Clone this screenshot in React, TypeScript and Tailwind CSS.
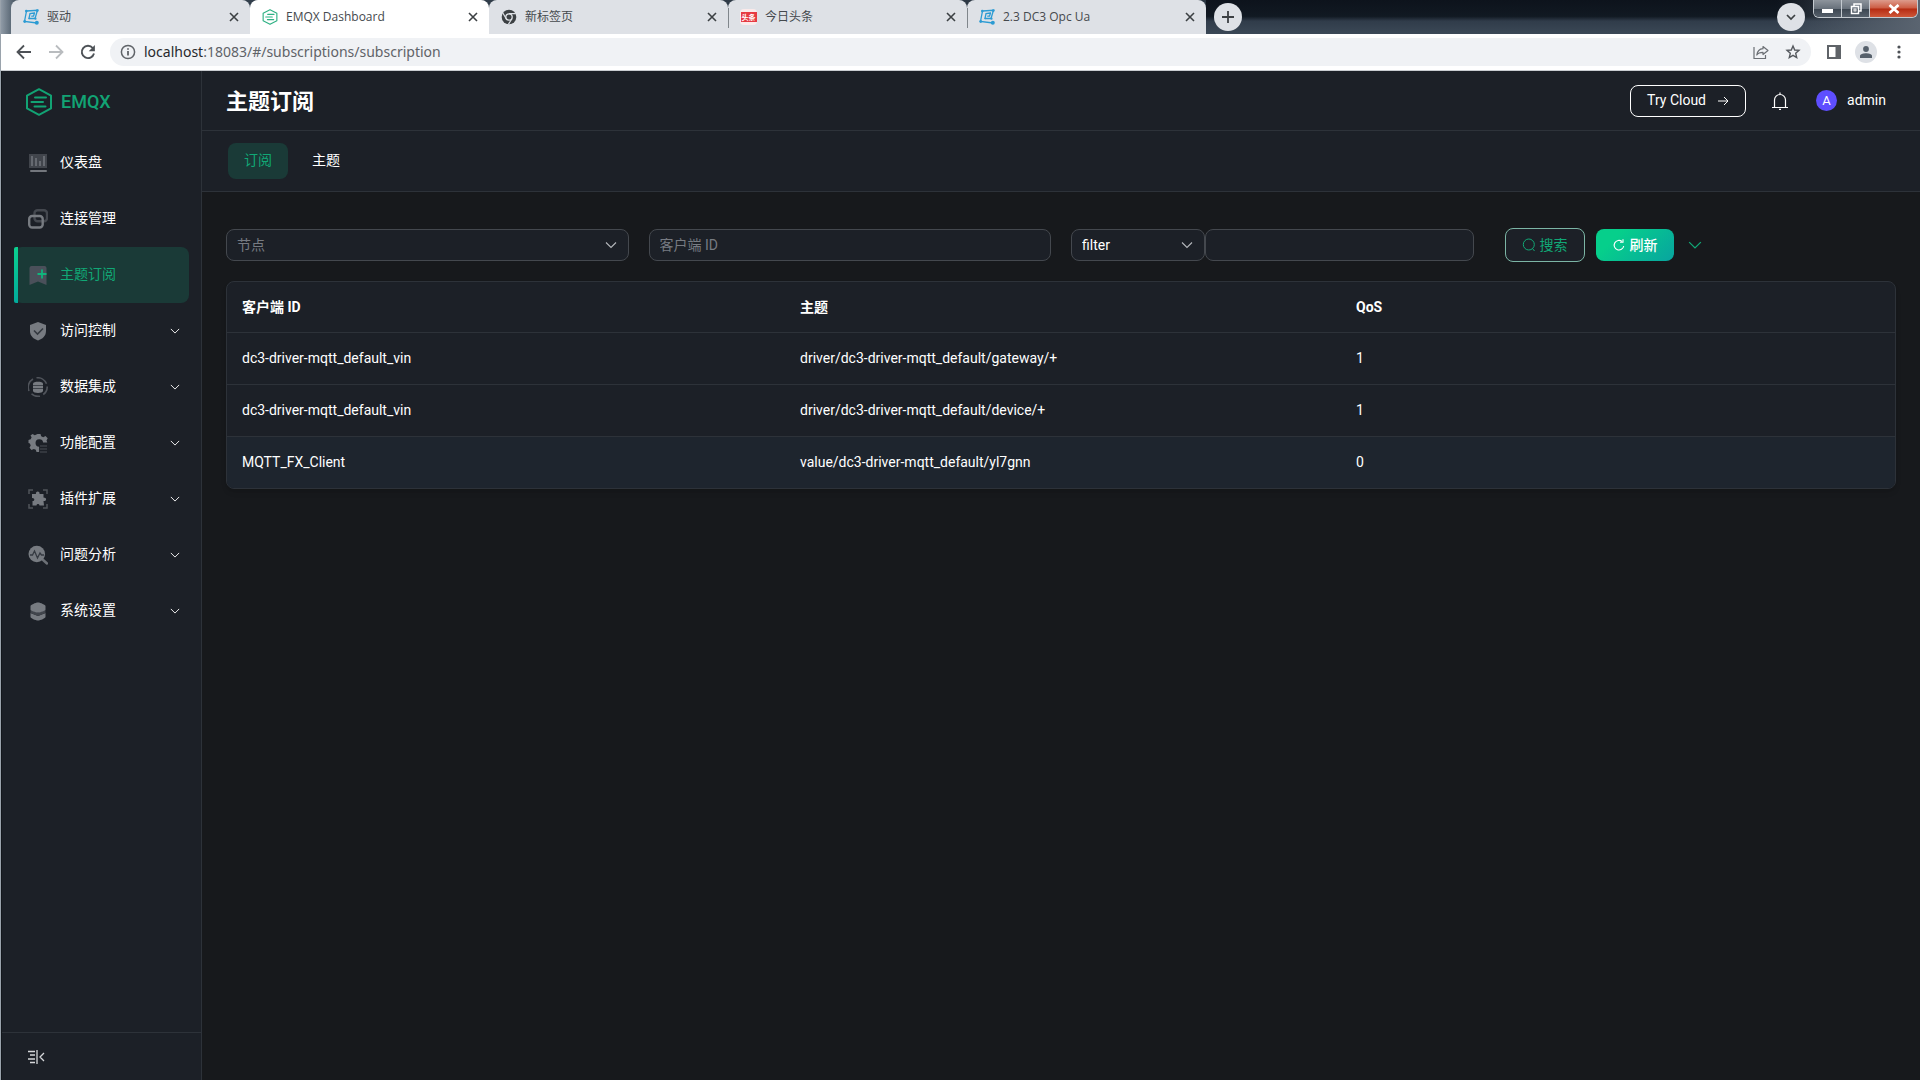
import React, { useState } from 'react';
import clsx from 'clsx';

const CloseIcon = () => (
  <svg viewBox="0 0 10 10" className="size-[10px]" fill="none" stroke="#3c4043" strokeWidth="1.6">
    <path d="M1 1l8 8M9 1L1 9" />
  </svg>
);

const ChevronDown = ({ className }: { className?: string }) => (
  <svg viewBox="0 0 12 12" className={clsx('size-3', className)} fill="none" stroke="currentColor" strokeWidth="1.1">
    <path d="M1 3.5l5 5 5-5" />
  </svg>
);

const EmqxMark = ({ className }: { className?: string }) => (
  <svg viewBox="0 0 28 28" className={className} fill="none" stroke="currentColor" strokeWidth="2" strokeLinejoin="round">
    <path d="M14 1.2l12 6.4v12.8L14 26.8 2 20.4V7.6z" />
    <path d="M10 9.5h11M6.5 14h11.500M9.500 18.5h11" strokeLinecap="round" />
  </svg>
);

const Dc3Icon = () => (
  <svg viewBox="0 0 16 16" className="size-4" fill="none" stroke="#2b9bd3" strokeWidth="1.3" strokeLinecap="round">
    <path d="M3.500 2L14.500 1.300 12 9.500M3.500 2L1.500 12.500 14 14M12 9.500L6 9.500" />
    <path d="M11.500 4L7 4.500 6 9.500M11.500 4L10.500 7.200H8.800" />
    <g fill="#2b9bd3" stroke="none">
      <circle cx="3.300" cy="2.100" r="1.300" />
      <circle cx="14.300" cy="1.600" r="1.400" />
      <circle cx="1.700" cy="12.500" r="1.400" />
      <circle cx="12.500" cy="9.700" r="1.100" />
      <circle cx="13.800" cy="13.800" r="2" />
    </g>
  </svg>
);

const ChromeIcon = () => (
  <svg viewBox="0 0 16 16" className="size-4">
    <circle cx="8" cy="8" r="7.3" fill="#3c4043" />
    <circle cx="8" cy="8" r="3.2" fill="none" stroke="#dee1e6" strokeWidth="1.3" />
    <path d="M8 4.7h6.800M5.200 9.700L1.700 3.800M10.800 9.700L7.400 15.400" stroke="#dee1e6" strokeWidth="1.2" />
  </svg>
);

const ToutiaoIcon = () => (
  <span className="flex h-4 w-[17px] items-center justify-center rounded-sm bg-[#fbeaea]">
    <span className="flex h-[10px] w-4 items-center justify-center bg-[#e63a42] text-[7px] leading-none font-bold text-white">
      头条
    </span>
  </span>
);

const browserTabs = [
  { title: '驱动', icon: <Dc3Icon /> },
  { title: 'EMQX Dashboard', icon: <EmqxMark className="size-4 text-[#2fb184]" />, active: true },
  { title: '新标签页', icon: <ChromeIcon /> },
  { title: '今日头条', icon: <ToutiaoIcon />, divider: true },
  { title: '2.3 DC3 Opc Ua', icon: <Dc3Icon />, divider: true },
];

const BrowserTabs = () => (
  <div className="flex h-[34px] bg-[linear-gradient(180deg,#0d131c_0%,#111922_48%,#303c4a_62%,#3b4856_100%)]">
    <div className="flex bg-[linear-gradient(90deg,#8f9aa6_0,#5d6b78_10px,#33404d_20px,#2b3642_100%)] pl-[10px]">
      {browserTabs.map((tab) => (
        <div
          key={tab.title}
          className={clsx(
            'relative flex h-[34px] w-[239px] items-center rounded-t-lg pr-[11px] pl-3',
            tab.active ? 'bg-white' : 'bg-[#dee1e6]',
          )}
        >
          {tab.divider && <span className="absolute top-2 left-0 h-5 w-px bg-[#80868b]" />}
          {tab.icon}
          <span className="ml-2 flex-1 text-[12px] leading-4 text-[#45494d]">{tab.title}</span>
          <button aria-label={`关闭 ${tab.title}`}>
            <CloseIcon />
          </button>
        </div>
      ))}
    </div>
    <button aria-label="新建标签页" className="mt-[3px] ml-2 flex size-7 items-center justify-center rounded-full bg-[#dee1e6]">
      <svg viewBox="0 0 12 12" className="size-3" stroke="#3c4043" strokeWidth="1.8">
        <path d="M6 0v12M0 6h12" />
      </svg>
    </button>
    <div className="ml-auto flex h-full bg-[linear-gradient(90deg,transparent,#5a6470)] pr-[2px]">
      <button aria-label="搜索标签页" className="mt-[3px] mr-2 flex size-7 items-center justify-center rounded-full bg-[#dee1e6]">
        <svg viewBox="0 0 10 10" className="size-[10px]" fill="none" stroke="#3c4043" strokeWidth="1.7">
          <path d="M1 3l4 4 4-4" />
        </svg>
      </button>
      <div className="flex h-[18px] divide-x divide-[#c4cad0] overflow-hidden rounded-b-md border border-t-0 border-[#c4cad0]">
        <button aria-label="最小化" className="flex w-7 items-end justify-center bg-[linear-gradient(180deg,#8d949c_0%,#69727c_50%,#3b4550_52%,#56606b_100%)] pb-1">
          <span className="h-1 w-[11px] bg-white" />
        </button>
        <button aria-label="还原" className="flex w-7 items-center justify-center bg-[linear-gradient(180deg,#8d949c_0%,#69727c_50%,#3b4550_52%,#56606b_100%)]">
          <svg viewBox="0 0 12 12" className="size-3" fill="none" stroke="#fff" strokeWidth="1.5">
            <path d="M4 3V1h7v7H9" />
            <rect x="1.5" y="3.5" width="7" height="7" />
            <rect x="4" y="6" width="2" height="2" strokeWidth="1" />
          </svg>
        </button>
        <button aria-label="关闭" className="flex w-[47px] items-center justify-center bg-[linear-gradient(180deg,#dd9b8c_0%,#cc5b42_48%,#b52b12_52%,#cf5738_100%)]">
          <svg viewBox="0 0 12 10" className="h-[10px] w-3" stroke="#fff" strokeWidth="2.8">
            <path d="M1.5 1l9 8M10.5 1l-9 8" />
          </svg>
        </button>
      </div>
    </div>
  </div>
);

const AddressBar = () => (
  <div className="flex h-[37px] items-center border-b border-[#c9ccd0] bg-white pr-[19px] pl-[15px] text-[#5f6368]">
    <button aria-label="后退">
      <svg viewBox="0 0 16 16" className="size-4" fill="none" stroke="#4d5156" strokeWidth="1.8">
        <path d="M15 8H2M8 1.5L1.5 8 8 14.5" />
      </svg>
    </button>
    <button aria-label="前进" className="ml-4">
      <svg viewBox="0 0 16 16" className="size-4" fill="none" stroke="#b9bcbf" strokeWidth="1.8">
        <path d="M1 8h13M8 1.5L14.5 8 8 14.5" />
      </svg>
    </button>
    <button aria-label="重新加载" className="ml-4">
      <svg viewBox="0 0 16 16" className="size-4" fill="none" stroke="#4d5156" strokeWidth="1.9">
        <path d="M14 9.5A6.2 6.2 0 1 1 12.8 4" />
        <path d="M14.9 1v6.200H8.700z" fill="#4d5156" stroke="none" />
      </svg>
    </button>
    <div className="ml-[14px] flex h-7 flex-1 items-center rounded-full bg-[#f0f2f5] pr-[10px] pl-[10px]">
      <svg viewBox="0 0 16 16" className="size-4" fill="none" stroke="#5f6368" strokeWidth="1.5">
        <circle cx="8" cy="8" r="6.6" />
        <path d="M8 7v4.500M8 4.300v1.500" strokeWidth="1.8" />
      </svg>
      <a href="#/subscriptions/subscription" className="ml-2 flex-1 font-['Noto_Sans'] text-[14px] leading-5">
        <span className="text-[#27292c]">localhost</span>:18083/#/subscriptions/subscription
      </a>
      <button aria-label="分享">
        <svg viewBox="0 0 16 16" className="size-4" fill="none" stroke="#6b6f74" strokeWidth="1.2">
          <path d="M1 3v11.500h11.500V11" />
          <path d="M10 2.500l5 4-5 4V8.300c-3 0-5 .8-6.200 2.700.5-3.500 2.700-6 6.200-6.300z" strokeLinejoin="round" />
        </svg>
      </button>
      <button aria-label="收藏" className="ml-4">
        <svg viewBox="0 0 16 16" className="size-4" fill="none" stroke="#55595e" strokeWidth="1.4">
          <path d="M8 2l1.700 4 4.300.4-3.300 2.900 1 4.300L8 11.300l-3.700 2.300 1-4.300L2 6.400 6.300 6z" />
        </svg>
      </button>
    </div>
    <button aria-label="侧边栏" className="ml-4">
      <svg viewBox="0 0 14 14" className="size-[14px]">
        <path d="M0 0h14v14H0z" fill="#5f6368" />
        <path d="M2 2h6.500v10H2z" fill="#fff" />
      </svg>
    </button>
    <button aria-label="用户" className="ml-[14px] flex size-[22px] items-center justify-center rounded-full bg-[#dee1e6]">
      <svg viewBox="0 0 12 12" className="size-3" fill="#56606b">
        <circle cx="6" cy="3" r="2.9" />
        <path d="M0 12V9.800C0 8 3.500 7.200 6 7.200s6 .8 6 2.600V12z" />
      </svg>
    </button>
    <button aria-label="菜单" className="ml-5">
      <svg viewBox="0 0 4 14" className="h-[14px] w-1" fill="#4d5156">
        <circle cx="2" cy="2" r="1.6" />
        <circle cx="2" cy="7" r="1.6" />
        <circle cx="2" cy="12" r="1.6" />
      </svg>
    </button>
  </div>
);

const menu = [
  {
    label: '仪表盘',
    icon: (
      <>
        <path d="M1 1h18v14H1z" fill="#41454c" />
        <path d="M4 3v10M8 5v8M12 8v5M16 3v10" stroke="#73777d" strokeWidth="1.5" />
        <path d="M3 18h15" stroke="#73777d" strokeWidth="2" strokeLinecap="round" />
      </>
    ),
  },
  {
    label: '连接管理',
    icon: (
      <g fill="none" strokeWidth="2.4">
        <rect x="6.500" y="1.200" width="12.500" height="11" rx="3" stroke="#44484f" />
        <rect x="1.200" y="7" width="13.500" height="11.500" rx="3" stroke="#777b81" />
      </g>
    ),
  },
  {
    label: '主题订阅',
    icon: (
      <>
        <path d="M3.500 1h13a2 2 0 0 1 2 2v17L10 16.500 1.500 20V3a2 2 0 0 1 2-2z" fill="#4a505a" />
        <path d="M14 4.500v9M9.500 9h9" stroke="#0fb57c" strokeWidth="1.8" />
      </>
    ),
  },
  {
    label: '访问控制',
    expandable: true,
    icon: (
      <>
        <path d="M10 1l8 3v6c0 5-3.500 8-8 9.500C5.500 18 2 15 2 10V4z" fill="#777b81" />
        <path d="M6 9.500l3.500 3.500L15 7.500" fill="none" stroke="#353a41" strokeWidth="1.6" />
      </>
    ),
  },
  {
    label: '数据集成',
    expandable: true,
    icon: (
      <>
        <g fill="none" stroke="#50545b" strokeWidth="1.6">
          <path d="M1 14a9.500 9.500 0 0 1 4-12M8.500 .800a9.500 9.500 0 0 1 10 6M19.200 9.500a9.500 9.500 0 0 1-4 8M12 19.200a9.500 9.500 0 0 1-8.500-2.500" />
        </g>
        <path d="M5 6.500c0-2.500 10-2.500 10 0v7.500c0 2.500-10 2.500-10 0z" fill="#777b81" />
        <path d="M5 8.500h10M5 11.500h10" stroke="#30353c" strokeWidth=".8" />
      </>
    ),
  },
  {
    label: '功能配置',
    expandable: true,
    icon: (
      <>
        <path
          d="M8 1h3l.7 2.300 2 .9L16 3l2.200 2.200L17 7.500l.8 2h-4.200a3.800 3.800 0 1 0-4 4.300v5.200H7l-.7-2.300-2-.8L2 17l-2-2.200 1.200-2.200-.8-2L-1 10V7l2.200-.7.9-2L1 2.500 3 1l2.300 1.300z"
          transform="translate(1.5 0)"
          fill="#777b81"
        />
        <path d="M12 13h7M12 16h7M12 19h7" stroke="#4b4f56" strokeWidth="1.2" />
      </>
    ),
  },
  {
    label: '插件扩展',
    expandable: true,
    icon: (
      <>
        <path d="M1 5V1h4M15 1h4v4M19 15v4h-4M5 19H1v-4" fill="none" stroke="#50545b" strokeWidth="1.5" />
        <path d="M4 5h4c-1-3.500 4.500-3.500 3.500 0h4v3.500c3.500 0 3.500 4 0 3.500l.5 4.500h-4.500c0-2-3-2-3 0H4.500V12C7 12.500 7 8.500 4 9z" fill="#777b81" />
      </>
    ),
  },
  {
    label: '问题分析',
    expandable: true,
    icon: (
      <>
        <path d="M14 14l5 4.500" stroke="#6c7076" strokeWidth="2.5" strokeLinecap="round" />
        <circle cx="8.800" cy="9" r="8.300" fill="#777b81" />
        <path d="M2 10h2.500l2-4 3 7 2.500-5 1.500 2H16" fill="none" stroke="#353a41" strokeWidth="1.3" />
      </>
    ),
  },
  {
    label: '系统设置',
    expandable: true,
    icon: (
      <>
        <path d="M2.500 12l7.500 3 7.500-3v4c0 1-5 3.500-7.500 3.500S2.500 17 2.500 16z" fill="#777b81" />
        <path d="M2.500 8.500l7.500 3 7.500-3V12L10 15l-7.500-3z" fill="#41454c" />
        <path d="M2.500 5c0-1 5-3.500 7.500-3.500S17.500 4 17.500 5v3.500c0 1-5 3-7.500 3s-7.500-2-7.500-3z" fill="#777b81" />
      </>
    ),
  },
];

const Sidebar = () => {
  const [active, setActive] = useState('主题订阅');

  return (
    <aside className="flex w-[200px] shrink-0 flex-col border-r border-[#2d3239] bg-[#1c2027]">
      <div className="flex h-16 items-center gap-2 pb-[2px] pl-[23px] text-[#12a374]">
        <EmqxMark className="size-7" />
        <span className="font-['Roboto'] text-[18px] leading-6 font-medium">EMQX</span>
      </div>
      <nav className="flex-1 px-3">
        {menu.map((item) => (
          <a
            key={item.label}
            href="#/"
            onClick={() => setActive(item.label)}
            className={clsx(
              'relative flex h-14 items-center rounded-lg pr-[9px] pl-[14px] text-[14px]',
              item.label === active ? 'bg-[#1a3a37] text-[#11a876]' : 'text-white',
            )}
          >
            {item.label === active && (
              <span className="absolute inset-y-0 left-0 w-1 rounded-l-xs bg-[linear-gradient(180deg,#0bd08f,#02ab9c)]" />
            )}
            <svg viewBox="0 0 20 20" className="size-5">
              {item.icon}
            </svg>
            <span className="ml-3 flex-1 pb-[2px]">{item.label}</span>
            {item.expandable && <ChevronDown className="size-[10px]" />}
          </a>
        ))}
      </nav>
      <div className="flex h-12 items-center border-t border-[#2d3239] pl-[26px]">
        <button aria-label="收起菜单">
          <svg viewBox="0 0 17 14" className="h-[14px] w-[17px]" fill="none" stroke="#d5d7da" strokeWidth="1.3">
            <path d="M0 1.500h7M2 5h5M0 9h7M2 12.500h5M9 0v14M16 3l-4 4 4 4" />
          </svg>
        </button>
      </div>
    </aside>
  );
};

const field = 'h-8 w-full rounded-lg border border-[#44484e] bg-[#1c2027] text-[14px] text-white placeholder:text-[#777b82] outline-none';

const FilterBar = () => (
  <form className="grid grid-cols-4 items-center gap-5" onSubmit={(e) => e.preventDefault()}>
    <div className="relative">
      <select aria-label="节点" className={clsx(field, 'appearance-none pr-8 pl-[10px] !text-[#777b82]')}>
        <option>节点</option>
      </select>
      <ChevronDown className="pointer-events-none absolute top-[10px] right-3 text-[#b5b8bc]" />
    </div>
    <input aria-label="客户端 ID" placeholder="客户端 ID" className={clsx(field, 'px-[10px]')} />
    <div className="flex">
      <div className="relative w-1/3">
        <select aria-label="主题匹配方式" className={clsx(field, 'appearance-none pr-8 pl-[10px]')}>
          <option>filter</option>
        </select>
        <ChevronDown className="pointer-events-none absolute top-[10px] right-3 text-[#b5b8bc]" />
      </div>
      <input aria-label="主题" className={clsx(field, 'flex-1 px-[10px]')} />
    </div>
    <div className="flex items-center pl-[11px] text-[14px]">
      <button type="submit" className="flex h-[34px] w-20 items-center justify-center gap-1 rounded-lg border border-[#7cb5a5] bg-[#1c2027] text-[#11a876]">
        <svg viewBox="0 0 14 14" className="size-[14px]" fill="none" stroke="currentColor">
          <circle cx="6.800" cy="6.500" r="5.500" />
          <path d="M10.500 10.500l2 2.500" />
        </svg>
        搜索
      </button>
      <button type="button" className="ml-[11px] flex h-8 w-[78px] items-center justify-center gap-1 rounded-lg bg-[linear-gradient(135deg,#06cf8b_25%,#08a79e_95%)] font-medium text-white">
        <svg viewBox="0 0 14 14" className="size-[14px]" fill="none" stroke="currentColor" strokeWidth="1.1">
          <path d="M11.700 8a4.800 4.800 0 1 1-1.700-4.500" />
          <path d="M8 4.200h3V1.200" />
        </svg>
        刷新
      </button>
      <button type="button" aria-label="展开" className="ml-[14px] text-[#11a876]">
        <ChevronDown className="size-[14px]" />
      </button>
    </div>
  </form>
);

const subscriptions = [
  { clientId: 'dc3-driver-mqtt_default_vin', topic: 'driver/dc3-driver-mqtt_default/gateway/+', qos: 1 },
  { clientId: 'dc3-driver-mqtt_default_vin', topic: 'driver/dc3-driver-mqtt_default/device/+', qos: 1 },
  { clientId: 'MQTT_FX_Client', topic: 'value/dc3-driver-mqtt_default/yl7gnn', qos: 0 },
];

const SubscriptionTable = () => (
  <div className="mt-[19px] overflow-hidden rounded-lg border border-[#2d3239] bg-[#1c2027] shadow-md">
    <table className="w-full table-fixed text-left text-[14px] leading-5">
      <thead>
        <tr className="h-[50px]">
          <th className="pl-[15px] font-bold">客户端 ID</th>
          <th className="pl-[17px] font-bold">主题</th>
          <th className="pl-[17px] font-bold">QoS</th>
        </tr>
      </thead>
      <tbody>
        {subscriptions.map((sub) => (
          <tr key={sub.topic} className="h-[52px] border-t border-[#2d3239] last:bg-[#1e252e]">
            <td className="pl-[15px]">{sub.clientId}</td>
            <td className="pl-[17px]">{sub.topic}</td>
            <td className="pl-[17px]">{sub.qos}</td>
          </tr>
        ))}
      </tbody>
    </table>
  </div>
);

export default function App() {
  return (
    <div className="flex min-h-screen flex-col border-l border-[#9aa3ac] bg-[#17191c] font-['Open_Sans','Noto_Sans_CJK_SC',sans-serif]">
      <BrowserTabs />
      <AddressBar />
      <div className="flex flex-1 border-l border-[#12161b] font-['Roboto','Noto_Sans_CJK_SC',sans-serif] text-white">
        <Sidebar />
        <div className="flex min-w-0 flex-1 flex-col">
          <header className="flex h-[60px] items-center border-b border-[#2d3239] bg-[#1c2027] pr-[34px] pl-6">
            <h1 className="flex-1 pt-[2px] text-[22px] leading-8 font-bold">主题订阅</h1>
            <a href="#/cloud" className="flex h-8 w-[116px] items-center justify-center gap-3 rounded-lg border border-white text-[14px]">
              Try Cloud
              <svg viewBox="0 0 11 10" className="h-[10px] w-[11px]" fill="none" stroke="#fff">
                <path d="M0 5h10M6 1l4 4-4 4" />
              </svg>
            </a>
            <button aria-label="通知" className="ml-[25px]">
              <svg viewBox="0 0 18 18" className="size-[18px]" fill="none" stroke="#fff" strokeWidth="1.2">
                <path d="M1 15.500h16M3.500 15.500V8a5.500 5.500 0 0 1 11 0v7.500M9 2.500V.5M8 17.300h2" />
              </svg>
            </button>
            <button className="ml-[27px] flex items-center text-[14px]">
              <span className="flex size-[21px] items-center justify-center rounded-full bg-[#5e4eff] text-[13px]">A</span>
              <span className="ml-[10px]">admin</span>
            </button>
          </header>
          <nav className="flex h-[61px] items-center border-b border-[#2d3239] bg-[#1c2027] pl-[26px] text-[14px]">
            <a href="#/subscriptions/subscription" className="flex h-9 w-[60px] items-center justify-center rounded-lg bg-[#1a3a37] pb-[2px] text-[#11a876]">
              订阅
            </a>
            <a href="#/subscriptions/topics" className="ml-6 pb-[2px]">
              主题
            </a>
          </nav>
          <main className="flex-1 px-6 pt-9">
            <FilterBar />
            <SubscriptionTable />
          </main>
        </div>
      </div>
    </div>
  );
}
